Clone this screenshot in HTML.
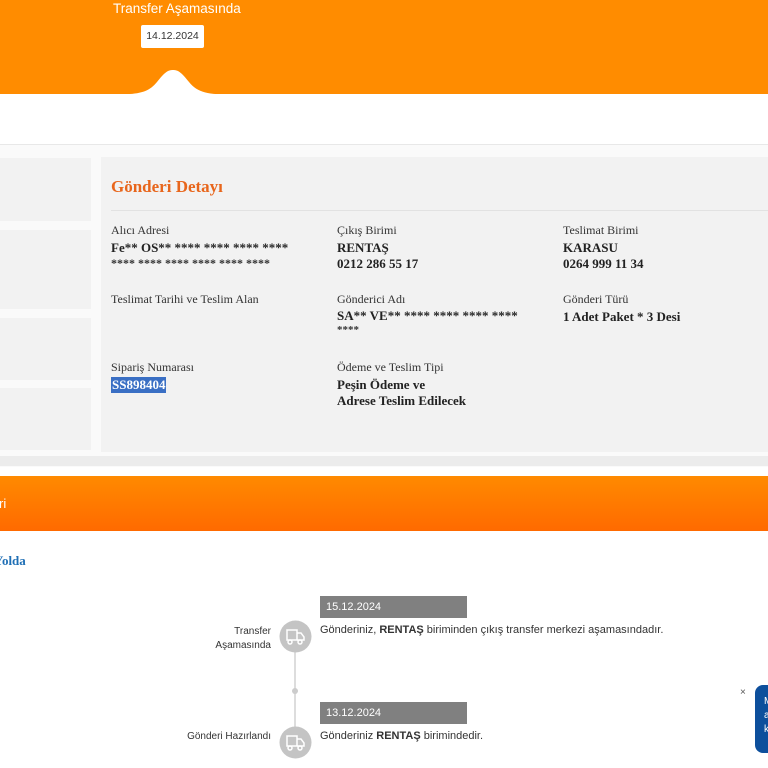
<!DOCTYPE html>
<html><head><meta charset="utf-8">
<style>
*{margin:0;padding:0;box-sizing:border-box}
body{width:768px;height:768px;overflow:hidden;background:#fff;position:relative;font-family:"Liberation Sans",sans-serif}
.abs{position:absolute}
.serif{font-family:"Liberation Serif",serif}
.lbl{font-size:12px;color:#333}
.val{font-size:13px;font-weight:bold;color:#222;line-height:16px}
.card{position:absolute;background:#f2f2f2;left:0;width:91px}
</style></head><body>
<div class="abs" style="left:0;top:0;width:768px;height:94px;background:#ff8c00"></div>
<svg class="abs" style="left:113px;top:66px" width="120" height="30" viewBox="0 0 120 30"><path d="M0 28.5 C25 28.5 35 27 44 16 C52 6 55 4 60 4 C65 4 68 6 76 16 C85 27 95 28.5 120 28.5 L120 30 L0 30 Z" fill="#fff"/></svg>
<div class="abs" style="left:113px;top:1px;font-size:13.5px;color:#fff">Transfer Aşamasında</div>
<div class="abs" style="left:141px;top:25px;width:63px;height:23px;background:#fff;border-radius:2px;font-size:10.5px;color:#333;text-align:center;line-height:23px">14.12.2024</div>
<div class="abs" style="left:0;top:144px;width:768px;height:1px;background:#e8e8e8"></div>
<div class="abs" style="left:0;top:145px;width:768px;height:322px;background:#fafafa"></div>
<div class="card" style="top:158px;height:63px"></div>
<div class="card" style="top:230px;height:79px"></div>
<div class="card" style="top:318px;height:62px"></div>
<div class="card" style="top:388px;height:62px"></div>
<div class="abs lbl" style="left:-3px;top:402px">i</div>
<div class="abs" style="left:101px;top:157px;width:667px;height:295px;background:#f2f2f2"></div>
<div class="abs" style="left:0;top:456px;width:768px;height:10px;background:#ececec"></div>
<div class="abs serif" style="left:111px;top:177px;font-size:17px;font-weight:bold;color:#e8661c">Gönderi Detayı</div>
<div class="abs" style="left:111px;top:210px;width:657px;height:1px;background:#e2e2e2"></div>
<div class="serif">
<div class="abs lbl" style="left:111px;top:223px">Alıcı Adresi</div>
<div class="abs val" style="left:111px;top:240px">Fe** OS** **** **** **** ****</div>
<div class="abs" style="left:111px;top:256px;font-size:12px;font-weight:bold;color:#333">**** **** **** **** **** ****</div>
<div class="abs lbl" style="left:337px;top:223px">Çıkış Birimi</div>
<div class="abs val" style="left:337px;top:240px">RENTAŞ<br>0212 286 55 17</div>
<div class="abs lbl" style="left:563px;top:223px">Teslimat Birimi</div>
<div class="abs val" style="left:563px;top:240px">KARASU<br>0264 999 11 34</div>
<div class="abs lbl" style="left:111px;top:292px">Teslimat Tarihi ve Teslim Alan</div>
<div class="abs lbl" style="left:337px;top:292px">Gönderici Adı</div>
<div class="abs val" style="left:337px;top:308px">SA** VE** **** **** **** ****</div>
<div class="abs" style="left:337px;top:324px;font-size:11px;font-weight:bold;color:#333">****</div>
<div class="abs lbl" style="left:563px;top:292px">Gönderi Türü</div>
<div class="abs val" style="left:563px;top:309px">1 Adet Paket * 3 Desi</div>
<div class="abs lbl" style="left:111px;top:360px">Sipariş Numarası</div>
<div class="abs val" style="left:111px;top:377px;background:#3a6fc4;color:#fff;padding:0 1px">SS898404</div>
<div class="abs lbl" style="left:337px;top:360px">Ödeme ve Teslim Tipi</div>
<div class="abs val" style="left:337px;top:377px">Peşin Ödeme ve<br>Adrese Teslim Edilecek</div>
<div class="abs" style="left:-6px;top:553px;font-size:13px;font-weight:bold;color:#1f6fb5">Yolda</div>
</div>
<div class="abs" style="left:0;top:476px;width:768px;height:55px;background:linear-gradient(#ff8a00,#ff6a00)"></div>
<div class="abs" style="left:-1px;top:496px;font-size:13px;color:#fff">ri</div>
<div class="abs" style="left:294px;top:636px;width:2px;height:100px;background:#ddd"></div>
<div class="abs" style="left:292px;top:688px;width:6px;height:6px;border-radius:50%;background:#ccc"></div>
<div class="abs" style="left:320px;top:596px;width:147px;height:22px;background:#808080;color:#fff;font-size:11px;line-height:22px;padding-left:6px">15.12.2024</div>
<div class="abs" style="left:320px;top:702px;width:147px;height:22px;background:#808080;color:#fff;font-size:11px;line-height:22px;padding-left:6px">13.12.2024</div>
<div class="abs" style="left:200px;top:625px;width:71px;text-align:right;font-size:10px;color:#333;line-height:14px">Transfer<br>Aşamasında</div>
<div class="abs" style="left:180px;top:731px;width:91px;text-align:right;font-size:10px;color:#333">Gönderi Hazırlandı</div>
<div class="abs" style="left:320px;top:624px;font-size:11px;color:#333">Gönderiniz, <b>RENTAŞ</b> biriminden çıkış transfer merkezi aşamasındadır.</div>
<div class="abs" style="left:320px;top:730px;font-size:11px;color:#333">Gönderiniz <b>RENTAŞ</b> birimindedir.</div>
<svg class="abs" style="left:279px;top:620px" width="33" height="33"><circle cx="16.5" cy="16.5" r="16" fill="#c4c4c4"/><g fill="none" stroke="#fff" stroke-width="1.5"><rect x="8" y="10" width="10" height="10"/><path d="M18 13h4l3 4v3h-7"/><circle cx="11" cy="22" r="2"/><circle cx="21" cy="22" r="2"/></g></svg>
<svg class="abs" style="left:279px;top:726px" width="33" height="33"><circle cx="16.5" cy="16.5" r="16" fill="#c4c4c4"/><g fill="none" stroke="#fff" stroke-width="1.5"><rect x="8" y="10" width="10" height="10"/><path d="M18 13h4l3 4v3h-7"/><circle cx="11" cy="22" r="2"/><circle cx="21" cy="22" r="2"/></g></svg>
<div class="abs" style="left:740px;top:687px;font-size:10px;color:#555">×</div>
<div class="abs" style="left:755px;top:685px;width:30px;height:68px;background:#0d4f9c;border-radius:8px;color:#fff;font-size:10px;line-height:14px;padding:10px 0 0 9px">M<br>a<br>k</div>
</body></html>
